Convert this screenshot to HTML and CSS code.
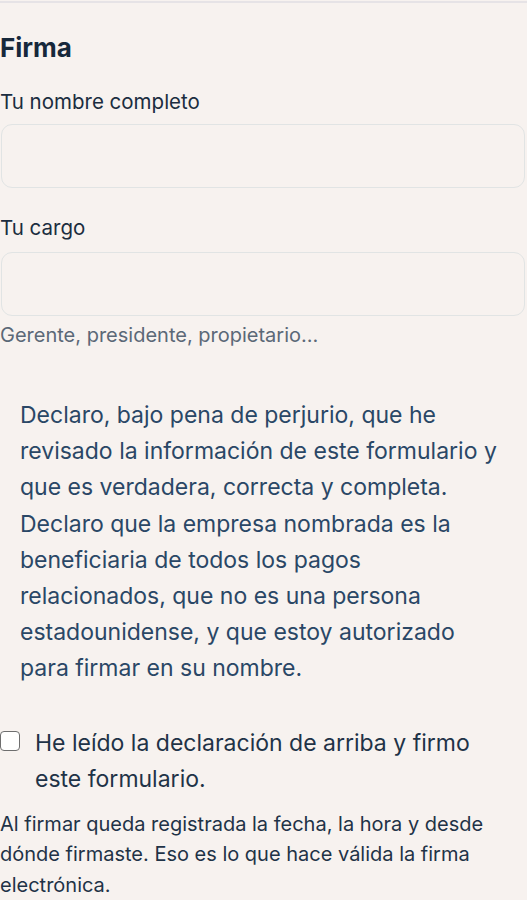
FILE: index.html
```html
<!DOCTYPE html>
<html lang="es">
<head>
<meta charset="utf-8">
<title>Firma</title>
<link rel="stylesheet" href="styles.css">
</head>
<body>
<div class="topline"></div>
<main class="page">
  <h2 class="title">Firma</h2>
  <div class="field field-nombre">
    <label class="label" for="nombre">Tu nombre completo</label>
    <input class="input" id="nombre" type="text">
  </div>
  <div class="field field-cargo">
    <label class="label" for="cargo">Tu cargo</label>
    <input class="input" id="cargo" type="text">
    <p class="hint">Gerente, presidente, propietario…</p>
  </div>
  <p class="declaration">Declaro, bajo pena de perjurio, que he revisado la información de este formulario y que es verdadera, correcta y completa. Declaro que la empresa nombrada es la beneficiaria de todos los pagos relacionados, que no es una persona estadounidense, y que estoy autorizado para firmar en su nombre.</p>
  <label class="check">
    <span class="box"></span>
    <span class="check-text">He leído la declaración de arriba y firmo este formulario.</span>
  </label>
  <p class="note">Al firmar queda registrada la fecha, la hora y desde dónde firmaste. Eso es lo que hace válida la firma electrónica.</p>
</main>
</body>
</html>
```
FILE: styles.css
```css
html, body {
  margin: 0;
  padding: 0;
  background: #f7f2ef;
}
body {
  font-family: Inter, "Noto Sans", "Liberation Sans", sans-serif;
  color: #1b2d40;
}
.topline {
  height: 2px;
  margin-top: 1px;
  background: #e6e3e6;
}
.page {
  padding: 0 2px 0 0;
}
.title {
  margin: 29px 0 0;
  font-size: 26px;
  font-weight: 700;
  line-height: 32px;
  color: #16283b;
}
.field {
  display: flex;
  flex-direction: column;
}
.label {
  font-size: 20.5px;
  line-height: 28px;
  color: #1b2d40;
}
.field-nombre .label {
  margin-top: 24px;
}
.field-cargo .label {
  margin-top: 26px;
}
.input {
  margin: 8px 0 0 1px;
  height: 64px;
  box-sizing: border-box;
  border: 1.5px solid #e1e4e4;
  border-radius: 11px;
  background: #f7f2ef;
  font: inherit;
  outline: none;
}
.field-cargo .input {
  margin-top: 10px;
}
.hint {
  margin: 5px 0 0;
  font-size: 20px;
  line-height: 28px;
  color: #5b6877;
}
.declaration {
  margin: 48px 0 0;
  padding: 0 20px;
  font-size: 23px;
  line-height: 36.2px;
  color: #2a4766;
}
.check {
  display: flex;
  align-items: flex-start;
  gap: 15px;
  margin-top: 38px;
  padding-right: 20px;
}
.box {
  flex: none;
  width: 20px;
  height: 20px;
  box-sizing: border-box;
  margin-top: 6px;
  border: 1.5px solid #6e6e6e;
  border-radius: 4px;
  background: #ffffff;
}
.check-text {
  font-size: 23px;
  line-height: 36px;
  color: #1f3347;
}
.note {
  margin: 12px 0 0;
  font-size: 20px;
  line-height: 30.5px;
  color: #1f3347;
}
```
